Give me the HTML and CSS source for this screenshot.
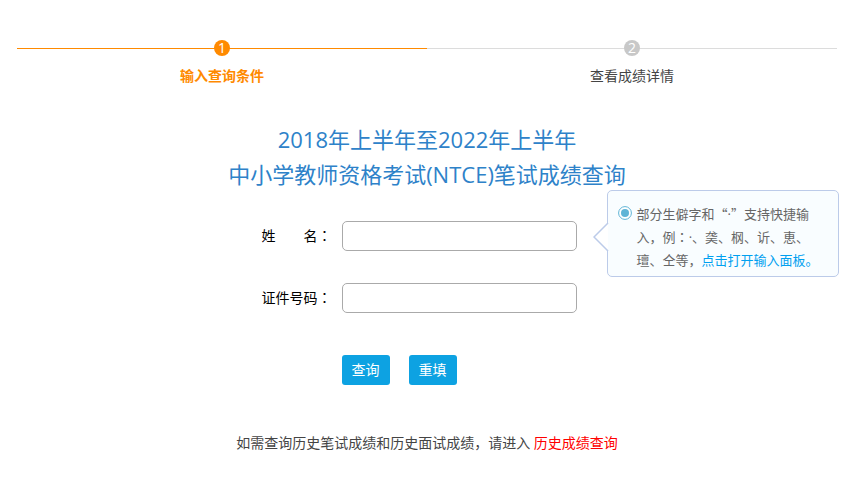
FILE: index.html
```html
<!DOCTYPE html>
<html lang="zh-CN">
<head>
    <meta charset="UTF-8">
    <meta name="viewport" content="width=device-width, initial-scale=1.0">
    <title>成绩查询</title>
    <link rel="stylesheet" href="styles.css">
</head>
<body>
    <div class="wrapper">
        <ol class="steps">
            <li class="step active"><span class="num">1</span>输入查询条件</li>
            <li class="step"><span class="num">2</span>查看成绩详情</li>
        </ol>
        <h1 class="title">2018年上半年至2022年上半年<br>中小学教师资格考试(NTCE)笔试成绩查询</h1>
        <form class="query">
            <div class="row">
                <label for="name">姓&emsp;&emsp;名<span class="colon" lang="zh-TW">：</span></label>
                <div class="field">
                    <input type="text" name="name" id="name">
                    <div class="tip">
                        <svg class="arrow" width="16" height="30" viewBox="0 0 16 30">
                            <path d="M15 1L1 15L15 29" fill="#fff" stroke="#bccbe9" stroke-width="1.5"/>
                        </svg>
                        <svg class="dot" width="14" height="14" viewBox="0 0 14 14">
                            <circle cx="7" cy="7" r="6.4" fill="#fff" stroke="#5fb4d6"/>
                            <circle cx="7" cy="7" r="4" fill="#5fb4d6"/>
                        </svg>
                        <p>部分生僻字和“<span class="latin">·</span>”支持快捷输入，例<span class="colon" lang="zh-TW">：</span><span class="latin">·</span>、䶮、㭎、䜣、恵、璮、仝等，<a href="#">点击打开输入面板。</a></p>
                    </div>
                </div>
            </div>
            <div class="row">
                <label for="idcard">证件号码<span class="colon" lang="zh-TW">：</span></label>
                <div class="field">
                    <input type="text" name="idcard" id="idcard">
                </div>
            </div>
            <div class="buttonrow">
                <button type="submit" class="btn">查询</button>
                <button type="reset" class="btn">重填</button>
            </div>
        </form>
        <p class="history">如需查询历史笔试成绩和历史面试成绩，请进入 <a href="#">历史成绩查询</a></p>
    </div>
</body>
</html>
```
FILE: styles.css
```css
body{
    margin: 0;
    font-family: "Open Sans", "Noto Sans CJK SC", sans-serif;
    font-size: 14px;
    line-height: 20px;
    color: #000;
    background-color: #fff;
}
a{
    text-decoration: none;
}
.wrapper{
    padding: 40px 20px 24px 17px;
}
.steps{
    display: flex;
    margin: 0;
    padding: 0;
    list-style: none;
}
.step{
    flex: 1;
    display: flex;
    flex-direction: column;
    align-items: center;
    gap: 10px;
    color: #444;
    background: linear-gradient(#dcdcdc, #dcdcdc) 0 8px / 100% 1px no-repeat;
}
.step.active{
    color: #ff8a00;
    font-weight: bold;
    background-image: linear-gradient(#ff8a00, #ff8a00);
}
.num{
    width: 16px;
    height: 16px;
    border-radius: 50%;
    background-color: #c8c8c8;
    color: #fff;
    font-size: 14px;
    font-weight: normal;
    line-height: 16px;
    text-align: center;
}
.active .num{
    background-color: #ff8a00;
}
.title{
    margin: 36px 0 29px;
    color: #2e82c9;
    font-size: 22px;
    font-weight: normal;
    line-height: 35px;
    text-align: center;
}
.row{
    display: grid;
    grid-template-columns: calc(38% + 3px) 1fr;
    column-gap: 10px;
    align-items: center;
    margin-bottom: 32px;
}
label{
    text-align: right;
}
.field{
    position: relative;
    width: 235px;
}
input{
    display: block;
    box-sizing: border-box;
    width: 100%;
    height: 30px;
    padding: 0 8px;
    border: 1px solid #aaa;
    border-radius: 5px;
    font: inherit;
}
.tip{
    position: absolute;
    left: 265px;
    top: -31px;
    display: flex;
    gap: 5px;
    box-sizing: border-box;
    width: 232px;
    padding: 11px 18px 5px 10px;
    border: 1px solid #bccbe9;
    border-radius: 5px;
    background-color: #f9fdff;
    color: #666;
    font-family: "Noto Sans CJK SC", sans-serif;
    font-size: 13px;
    line-height: 23px;
}
.tip p{
    flex: 1;
    margin: 0;
}
.tip a{
    color: #00a0f0;
}
.latin{
    font-family: "Open Sans", sans-serif;
    line-height: 1;
}
.colon{
    font-family: "Noto Sans CJK TC", sans-serif;
    line-height: 1;
}
.dot{
    flex: none;
    margin-top: 4px;
}
.arrow{
    position: absolute;
    left: -15px;
    top: 31px;
}
.buttonrow{
    display: flex;
    gap: 19px;
    margin: 42px 0 48px calc(38% + 13px);
}
.btn{
    width: 48px;
    height: 30px;
    padding: 0;
    border: 0;
    border-radius: 3px;
    background-color: #0da2e2;
    color: #fff;
    font: inherit;
    cursor: pointer;
}
.history{
    margin: 0;
    color: #444;
    text-align: center;
}
.history a{
    color: #f00;
}
```
